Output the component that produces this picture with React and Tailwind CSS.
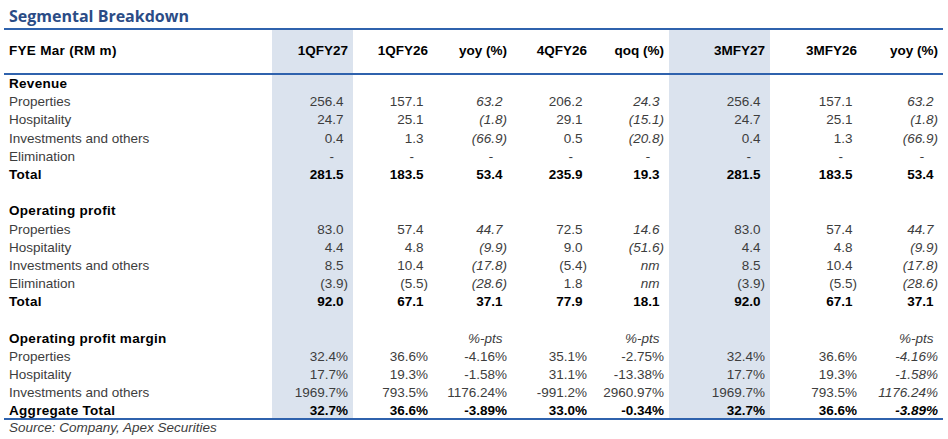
const cols = ['1QFY27', '1QFY26', 'yoy (%)', '4QFY26', 'qoq (%)', '3MFY27', '3MFY26', 'yoy (%)']

const colW = ['w-[81px]', 'w-[80px]', 'w-[79px]', 'w-[80px]', 'w-[77px]', 'w-[101px]', 'w-[92px]', 'w-[81px]']
const shaded = [true, false, false, false, false, true, false, false]

// kind: 'head' section heading, 'row' normal, 'total' bold, 'blank'
const rows = [
  { kind: 'head', label: 'Revenue' },
  { kind: 'row', label: 'Properties', v: ['256.4', '157.1', '63.2', '206.2', '24.3', '256.4', '157.1', '63.2'] },
  { kind: 'row', label: 'Hospitality', v: ['24.7', '25.1', '(1.8)', '29.1', '(15.1)', '24.7', '25.1', '(1.8)'] },
  { kind: 'row', label: 'Investments and others', v: ['0.4', '1.3', '(66.9)', '0.5', '(20.8)', '0.4', '1.3', '(66.9)'] },
  { kind: 'row', label: 'Elimination', v: ['-', '-', '-', '-', '-', '-', '-', '-'] },
  { kind: 'total', label: 'Total', v: ['281.5', '183.5', '53.4', '235.9', '19.3', '281.5', '183.5', '53.4'] },
  { kind: 'blank' },
  { kind: 'head', label: 'Operating profit' },
  { kind: 'row', label: 'Properties', v: ['83.0', '57.4', '44.7', '72.5', '14.6', '83.0', '57.4', '44.7'] },
  { kind: 'row', label: 'Hospitality', v: ['4.4', '4.8', '(9.9)', '9.0', '(51.6)', '4.4', '4.8', '(9.9)'] },
  { kind: 'row', label: 'Investments and others', v: ['8.5', '10.4', '(17.8)', '(5.4)', 'nm', '8.5', '10.4', '(17.8)'] },
  { kind: 'row', label: 'Elimination', v: ['(3.9)', '(5.5)', '(28.6)', '1.8', 'nm', '(3.9)', '(5.5)', '(28.6)'] },
  { kind: 'total', label: 'Total', v: ['92.0', '67.1', '37.1', '77.9', '18.1', '92.0', '67.1', '37.1'] },
  { kind: 'blank' },
  { kind: 'head', label: 'Operating profit margin', v: ['', '', '%-pts', '', '%-pts', '', '', '%-pts'], pct: true },
  { kind: 'row', label: 'Properties', pct: true, v: ['32.4%', '36.6%', '-4.16%', '35.1%', '-2.75%', '32.4%', '36.6%', '-4.16%'] },
  { kind: 'row', label: 'Hospitality', pct: true, v: ['17.7%', '19.3%', '-1.58%', '31.1%', '-13.38%', '17.7%', '19.3%', '-1.58%'] },
  { kind: 'row', label: 'Investments and others', pct: true, v: ['1969.7%', '793.5%', '1176.24%', '-991.2%', '2960.97%', '1969.7%', '793.5%', '1176.24%'] },
  { kind: 'total', label: 'Aggregate Total', pct: true, last: true, v: ['32.7%', '36.6%', '-3.89%', '33.0%', '-0.34%', '32.7%', '36.6%', '-3.89%'] },
]

function padFor(val) {
  if (val === '-') return 'pr-[19px]'
  if (val.endsWith(')') || val.endsWith('%')) return 'pr-[5px]'
  return 'pr-[9.5px]'
}

function isItalic(row, i, val) {
  if (val === '%-pts') return true
  if (row.pct) return i === 7
  if (row.kind === 'total') return false
  return i === 2 || i === 4 || i === 7
}

function Row({ row }) {
  const h = row.last ? 'h-[15.7px]' : 'h-[18.2px]'
  const vals = row.v || ['', '', '', '', '', '', '', '']
  const bold = row.kind === 'total' || row.kind === 'head'
  return (
    <div className={`flex ${h} leading-[18.2px]`}>
      <div
        className={`w-[268px] pl-[5px] ${
          bold ? 'font-bold text-black tracking-[0.3px]' : 'text-[#3d3d3d]'
        }`}
      >
        {row.label}
      </div>
      {vals.map((val, i) => (
        <div
          key={i}
          className={`${colW[i]} text-right whitespace-nowrap ${shaded[i] ? 'bg-[#dbe3ee]' : ''} ${padFor(val)} ${
            isItalic(row, i, val) ? 'italic' : ''
          } ${row.kind === 'total' ? 'font-bold text-black' : 'text-[#3d3d3d]'}`}
        >
          {val}
        </div>
      ))}
    </div>
  )
}

export default function App() {
  return (
    <div className="w-[948px] h-[439px] bg-white font-['Liberation_Sans',Arial,sans-serif] text-[13.5px] overflow-hidden">
      <div className="h-[28px] pt-[6px] pl-[9px] font-['Open_Sans',sans-serif] font-bold text-[16px] leading-[20px] text-[#2b4c86]">
        Segmental Breakdown
      </div>
      <div className="ml-[4px] w-[939px] border-t-2 border-b-2 border-[#2f62ad]">
        <div className="flex h-[45px] border-b-2 border-[#2f62ad] font-bold text-black">
          <div className="w-[268px] pl-[5px] flex items-center tracking-[0.3px]">FYE Mar (RM m)</div>
          {cols.map((c, i) => (
            <div
              key={i}
              className={`${colW[i]} pr-[5px] flex items-center justify-end ${shaded[i] ? 'bg-[#dbe3ee]' : ''}`}
            >
              {c}
            </div>
          ))}
        </div>
        {rows.map((r, i) => (
          <Row key={i} row={r} />
        ))}
      </div>
      <div className="pl-[9px] leading-[16px] italic text-[#3d3d3d]">Source: Company, Apex Securities</div>
    </div>
  )
}
